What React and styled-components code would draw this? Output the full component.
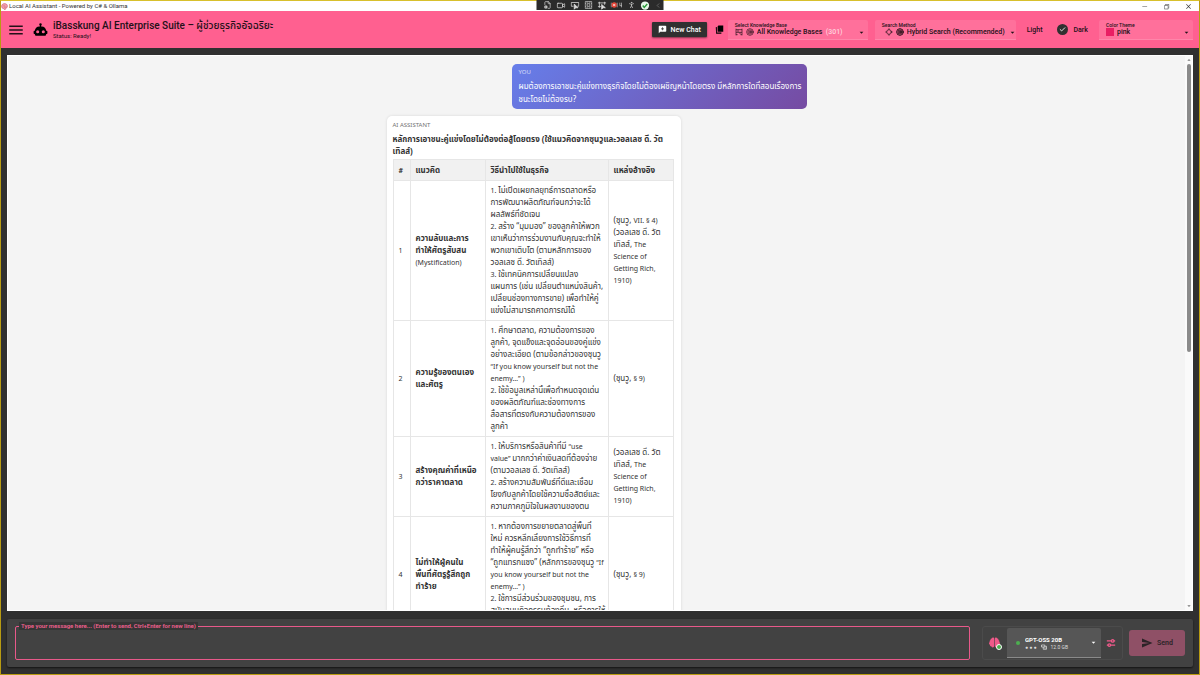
import styled, { createGlobalStyle } from 'styled-components';
import { FaBrain } from 'react-icons/fa';
import { MdArrowDropDown, MdArrowDropUp, MdSend, MdMenu } from 'react-icons/md';
import { VscChromeClose, VscChromeMinimize, VscChromeRestore } from 'react-icons/vsc';
import {
  Check,
  ChevronLeft,
  FileCog,
  Locate,
  PersonStanding,
  Target,
  Video
} from 'lucide-react';

const GlobalStyle = createGlobalStyle`
  * {
    box-sizing: border-box;
  }

  body {
    margin: 0;
    overflow: hidden;
    font-family: Roboto, "Noto Sans Thai", sans-serif;
  }

  button, select, textarea, input {
    margin: 0;
    padding: 0;
    border: 0;
    font: inherit;
    color: inherit;
    background: transparent;
  }

  svg {
    display: block;
    flex: none;
  }
`;

const Window = styled.div`
  display: flex;
  flex-direction: column;
  height: 100vh;
  border: 1px solid #b89b12;
  border-top-color: #d8c02c;
  background: #303030;
`;

const TitleBar = styled.div`
  display: flex;
  align-items: center;
  flex: none;
  height: 10px;
  background: #fff;
  color: #333;
  font-size: 6px;
  line-height: 8px;
  gap: 1px;
`;

const WindowButtons = styled.div`
  display: flex;
  margin-left: auto;
  gap: 15px;
  padding-right: 7px;
`;

const WindowButton = styled.button`
  display: flex;
  color: #333;
`;

const DebugBar = styled.div`
  position: absolute;
  top: 0;
  left: 50%;
  transform: translateX(-50%);
  display: flex;
  align-items: center;
  justify-content: space-between;
  width: 127px;
  height: 10px;
  padding: 0 2px 0 7px;
  background: #2b2b2b;
  color: #ddd;
`;

const Header = styled.header`
  display: flex;
  align-items: center;
  flex: none;
  height: 37px;
  padding: 0 6px;
  background: #ff6090;
  color: #241018;
`;

const MenuButton = styled.button`
  display: flex;
  margin-right: 8px;
`;

const Brand = styled.div`
  margin-left: 5px;
  margin-right: auto;
`;

const BrandTitle = styled.h1`
  margin: 0;
  font-size: 10px;
  font-weight: 500;
  line-height: 12px;
  white-space: nowrap;
`;

const Status = styled.div`
  font-size: 6px;
  line-height: 8px;
`;

const NewChatButton = styled.button`
  display: flex;
  align-items: center;
  gap: 4px;
  height: 15px;
  margin-right: 8px;
  padding: 0 6px;
  border-radius: 1px;
  background: #303030;
  box-shadow: 0 1px 2px rgba(0, 0, 0, 0.5);
  color: #fff;
  font-size: 7px;
  font-weight: 500;
  white-space: nowrap;
`;

const IconButton = styled.button`
  display: flex;
  color: ${props => props.$color || 'inherit'};
`;

const Field = styled.div`
  display: flex;
  flex-direction: column;
  justify-content: center;
  width: ${props => props.$width};
  height: 20px;
  margin-left: ${props => props.$gap};
  padding: 0 2px 0 7px;
  border-bottom: 1px solid #ff86aa;
  border-radius: 2px 2px 0 0;
  background: #ff709b;
`;

const FieldLabel = styled.label`
  font-size: 5px;
  font-weight: 500;
  line-height: 6px;
`;

const FieldRow = styled.div`
  display: flex;
  align-items: center;
  gap: 3px;
  height: 9px;
  padding-left: ${props => props.$indent || 0};
  font-size: 7px;
  font-weight: 500;
  line-height: 9px;
`;

const Select = styled.select`
  appearance: none;
  height: 9px;
  line-height: 9px;
  outline: none;
`;

const Count = styled.span`
  color: #ffd0de;
`;

const Arrow = styled.span`
  display: flex;
  margin-left: auto;
`;

const Swatch = styled.span`
  width: 8px;
  height: 8px;
  background: #e91e63;
`;

const ThemeToggle = styled.div`
  display: flex;
  align-items: center;
  margin: 0 11px;
  font-size: 7px;
  font-weight: 500;
`;

const ToggleLabel = styled.label`
  display: flex;
  align-items: center;
  gap: 6px;
  margin-left: 14px;
`;

const ToggleCircle = styled.span`
  display: grid;
  place-items: center;
  width: 11px;
  height: 11px;
  border-radius: 50%;
  background: #303030;
  color: #fff;

  > * {
    grid-area: 1 / 1;
  }
`;

const ToggleInput = styled.input`
  appearance: none;
  width: 11px;
  height: 11px;
`;

const ChatFrame = styled.main`
  display: flex;
  flex: 1;
  min-height: 0;
  margin: 7px 6px 8px;
  border: 1px solid #fff;
  background: #f4f4f4;
`;

const Messages = styled.div`
  flex: 1;
  overflow: hidden;
  padding-top: 8px;
  color: #333;
  font-family: "Noto Sans", "Noto Sans Thai", sans-serif;
  font-size: 8px;
  line-height: 12px;
`;

const Thread = styled.div`
  display: flex;
  flex-direction: column;
  gap: 7px;
  max-width: 420px;
  margin: 0 auto;
`;

const Message = styled.article`
  border-radius: 5px;
  white-space: pre;
`;

const UserMessage = styled(Message)`
  align-self: flex-end;
  width: 295px;
  height: 45px;
  padding: 2px 7px;
  background: linear-gradient(135deg, #667eea 0%, #764ba2 100%);
  color: #fff;
  line-height: 13px;
`;

const BotMessage = styled(Message)`
  width: 294px;
  padding: 3px 6px;
  background: #fff;
  box-shadow: 0 0 3px rgba(0, 0, 0, 0.12);
`;

const Author = styled.div`
  font-size: 6px;
  opacity: 0.7;
`;

const Heading = styled.h2`
  margin: 2px 0;
  font-size: 8px;
  font-weight: 700;
  line-height: 12px;
`;

const Latin = styled.span`
  font-size: 7px;
  line-height: 10px;
`;

const Table = styled.table`
  width: 280px;
  table-layout: fixed;
  border-collapse: collapse;
`;

const Col = styled.col`
  width: ${props => props.$width};
`;

const HeadCell = styled.th`
  padding: 4px 5px;
  border: 1px solid #e6e6e6;
  background: #f1f1f1;
  text-align: left;
`;

const Cell = styled.td`
  padding: 3px 5px 4px;
  border: 1px solid #e6e6e6;
`;

const ScrollTrack = styled.div`
  display: flex;
  flex-direction: column;
  align-items: center;
  width: 7px;
  background: #fafafa;
  color: #777;
`;

const ScrollThumb = styled.div`
  width: 4px;
  height: 52%;
  border-radius: 2px;
  background: #8a8a8a;
`;

const ScrollEnd = styled.span`
  margin-top: auto;
`;

const Composer = styled.form`
  display: flex;
  align-items: center;
  flex: none;
  height: 48px;
  margin: 0 6px 7px;
  padding: 0 8px;
  border-radius: 2px;
  background: #424242;
  box-shadow: 0 1px 2px rgba(0, 0, 0, 0.6);
`;

const MessageBox = styled.div`
  position: relative;
  display: flex;
  flex: 1;
  height: 34px;
  border: 1px solid #e8598a;
  border-radius: 2px;
`;

const MessageLabel = styled.label`
  position: absolute;
  top: -5px;
  left: 3px;
  padding: 0 2px;
  background: #353535;
  color: #f0608f;
  font-size: 6px;
  font-weight: 600;
  line-height: 8px;
`;

const MessageInput = styled.textarea`
  flex: 1;
  padding: 8px 6px;
  color: #fff;
  font-size: 7px;
  resize: none;
  outline: none;
`;

const ModelPanel = styled.div`
  display: flex;
  align-items: center;
  height: 34px;
  margin: 0 6px 0 12px;
  padding: 0 6px;
  border: 1px solid #4b4b4b;
  border-radius: 3px;
  gap: 5px;
`;

const ModelField = styled.div`
  display: flex;
  align-items: center;
  width: 94px;
  height: 30px;
  padding: 0 3px 0 9px;
  border-bottom: 1px solid #8a8a8a;
  border-radius: 2px 2px 0 0;
  background: #565656;
  color: #fff;
  gap: 5px;
`;

const OnlineDot = styled.span`
  width: 4px;
  height: 4px;
  border-radius: 50%;
  background: #4caf50;
`;

const ModelName = styled(Select)`
  display: block;
  font-size: 6px;
  font-weight: 700;
`;

const ModelInfo = styled.div`
  display: flex;
  align-items: center;
  gap: 4px;
  height: 6px;
  color: #ddd;
  font-size: 5px;
  line-height: 6px;
`;

const SendButton = styled.button`
  display: flex;
  align-items: center;
  justify-content: center;
  gap: 4px;
  width: 56px;
  height: 26px;
  border-radius: 3px;
  background: #8f5066;
  color: #2b2327;
  font-size: 7px;
  font-weight: 600;
`;

const RobotIcon = () => (
  <svg width="15" height="15" viewBox="0 0 24 24" fill="#000">
    <path d="M12,2A2,2 0 0,1 14,4C14,4.74 13.6,5.39 13,5.73V7H14A7,7 0 0,1 21,14H22A1,1 0 0,1 23,15V18A1,1 0 0,1 22,19H21V20A2,2 0 0,1 19,22H5A2,2 0 0,1 3,20V19H2A1,1 0 0,1 1,18V15A1,1 0 0,1 2,14H3A7,7 0 0,1 10,7H11V5.73C10.4,5.39 10,4.74 10,4A2,2 0 0,1 12,2M7.5,13A2.5,2.5 0 0,0 5,15.5A2.5,2.5 0 0,0 7.5,18A2.5,2.5 0 0,0 10,15.5A2.5,2.5 0 0,0 7.5,13M16.5,13A2.5,2.5 0 0,0 14,15.5A2.5,2.5 0 0,0 16.5,18A2.5,2.5 0 0,0 19,15.5A2.5,2.5 0 0,0 16.5,13Z" />
  </svg>
);

const ChatPlusIcon = () => (
  <svg width="9" height="9" viewBox="0 0 24 24" fill="#fff">
    <path d="M4 2h16a2 2 0 0 1 2 2v12a2 2 0 0 1-2 2H6l-4 4V4a2 2 0 0 1 2-2zm7 4v3H8v2h3v3h2v-3h3V9h-3V6z" />
  </svg>
);

const BooksIcon = () => (
  <svg width="9" height="9" viewBox="0 0 24 24" fill="#000">
    <path d="M9 1h13v17H7V4zM2 6l3-1v15h12v3H3z" />
  </svg>
);

const KnowledgeIcon = () => (
  <svg width="8" height="8" viewBox="0 0 24 24" fill="none" stroke="currentColor" strokeWidth="2">
    <path d="M3 2v20M21 2v20M3 5h18M3 13h18M3 20h5M16 20h5M9 5v8M15 13v5" />
  </svg>
);

const StackIcon = () => (
  <svg width="6" height="6" viewBox="0 0 24 24" fill="none" stroke="currentColor" strokeWidth="3">
    <path d="M2 4h13v8H2zM9 12v9h13V9h-7M13 16h6" />
  </svg>
);

const LogoIcon = () => (
  <svg width="7" height="7" viewBox="0 0 24 24" fill="#f2a0ae" stroke="#c9586c" strokeWidth="2">
    <path d="M12 2c-5 0-10 3-10 9 0 5 3 8 7 8l2 3h4v-4c5 0 7-3 7-8 0-5-5-8-10-8zM6 10c3-2 4 2 7-1M10 15c3 0 4-2 8-2" />
  </svg>
);

const ScreenPointerIcon = () => (
  <svg width="9" height="9" viewBox="0 0 24 24" fill="none" stroke="currentColor" strokeWidth="2">
    <path d="M8 14H2V4h20v10h-4" />
    <path d="M10 8v14l4-4h6z" fill="currentColor" />
  </svg>
);

const LayoutBoundsIcon = () => (
  <svg width="8" height="8" viewBox="0 0 24 24" fill="none" stroke="currentColor" strokeWidth="2">
    <path d="M2 2h20v20H2zM8 8h8v8H8zM8 2v3M16 2v3M8 19v3M16 19v3M2 8h3M2 16h3M19 8h3M19 16h3" />
  </svg>
);

const FramePointerIcon = () => (
  <svg width="9" height="9" viewBox="0 0 24 24" fill="none" stroke="currentColor" strokeWidth="2">
    <path d="M5 2v16M19 2v8M1 5h22M1 15h8" />
    <path d="M11 9v13l4-4h6z" fill="currentColor" />
  </svg>
);

const HotReloadIcon = () => (
  <svg width="12" height="8" viewBox="0 0 36 24" fill="none" stroke="#ccc" strokeWidth="2">
    <path d="M2 5v14M20 5v14M28 5v9h6M33 5v14" />
    <circle cx="11" cy="12" r="8" fill="#e5483b" stroke="none" />
    <path d="M8 9l6 6M14 9l-6 6" stroke="#fff" />
  </svg>
);

const PassIcon = () => (
  <svg width="9" height="9" viewBox="0 0 24 24" fill="none">
    <circle cx="12" cy="12" r="11" fill="#e8f7ea" />
    <path d="M6 12l4 5 8-9" stroke="#2e9d3c" strokeWidth="4" />
  </svg>
);

const BrainBadge = () => (
  <svg width="13" height="13" viewBox="0 0 26 26">
    <FaBrain size={22} color="#ef5a8a" />
    <circle cx="20" cy="20" r="5" fill="#4caf50" stroke="#fff" strokeWidth="2" />
  </svg>
);

const SlidersIcon = () => (
  <svg width="10" height="10" viewBox="0 0 24 24" fill="none" stroke="currentColor" strokeWidth="3">
    <path d="M2 7h11M19 7h3M2 17h3M11 17h11" />
    <circle cx="16" cy="7" r="3" />
    <circle cx="8" cy="17" r="3" />
  </svg>
);

const rows = [
  {
    concept: 'ความลับและการ\nทำให้ศัตรูสับสน',
    term: '(Mystification)',
    usage: `1. ไม่เปิดเผยกลยุทธ์การตลาดหรือ
การพัฒนาผลิตภัณฑ์จนกว่าจะได้
ผลลัพธ์ที่ชัดเจน
2. สร้าง “มุมมอง” ของลูกค้าให้พวก
เขาเห็นว่าการร่วมงานกับคุณจะทำให้
พวกเขาเติบโต (ตามหลักการของ
วอลเลซ ดี. วัตเทิลส์)
3. ใช้เทคนิคการเปลี่ยนแปลง
แผนการ (เช่น เปลี่ยนตำแหน่งสินค้า,
เปลี่ยนช่องทางการขาย) เพื่อทำให้คู่
แข่งไม่สามารถคาดการณ์ได้`,
    source: '(ซุนวู, VII. § 4)\n(วอลเลซ ดี. วัต\nเทิลส์, The\nScience of\nGetting Rich,\n1910)'
  },
  {
    concept: 'ความรู้ของตนเอง\nและศัตรู',
    usage: `1. ศึกษาตลาด, ความต้องการของ
ลูกค้า, จุดแข็งและจุดอ่อนของคู่แข่ง
อย่างละเอียด (ตามข้อกล่าวของซุนวู
“If you know yourself but not the
enemy…” )
2. ใช้ข้อมูลเหล่านี้เพื่อกำหนดจุดเด่น
ของผลิตภัณฑ์และช่องทางการ
สื่อสารที่ตรงกับความต้องการของ
ลูกค้า`,
    source: '(ซุนวู, § 9)'
  },
  {
    concept: 'สร้างคุณค่าที่เหนือ\nกว่าราคาตลาด',
    usage: `1. ให้บริการหรือสินค้าที่มี “use
value” มากกว่าค่าเงินสดที่ต้องจ่าย
(ตามวอลเลซ ดี. วัตเทิลส์)
2. สร้างความสัมพันธ์ที่ดีและเชื่อม
โยงกับลูกค้าโดยใช้ความซื่อสัตย์และ
ความภาคภูมิใจในผลงานของตน`,
    source: '(วอลเลซ ดี. วัต\nเทิลส์, The\nScience of\nGetting Rich,\n1910)'
  },
  {
    concept: 'ไม่ทำให้ผู้คนใน\nพื้นที่ศัตรูรู้สึกถูก\nทำร้าย',
    usage: `1. หากต้องการขยายตลาดสู่พื้นที่
ใหม่ ควรหลีกเลี่ยงการใช้วิธีการที่
ทำให้ผู้คนรู้สึกว่า “ถูกทำร้าย” หรือ
“ถูกแทรกแซง” (หลักการของซุนวู “If
you know yourself but not the
enemy…” )
2. ใช้การมีส่วนร่วมของชุมชน, การ
สนับสนุนกิจกรรมท้องถิ่น, หรือการให้
ความรู้แก่ชุมชน`,
    source: '(ซุนวู, § 9)'
  }
];

// Latin runs look larger than Thai at the same size, so they get their own
const MixedText = ({ children }) =>
  children
    .split(/([“(]?[A-Za-z§\d][A-Za-z§\d ,.…”)]*)/)
    .map((part, index) => (index % 2 ? <Latin key={index}>{part}</Latin> : part));

const DropArrow = () => (
  <Arrow>
    <MdArrowDropDown size={9} />
  </Arrow>
);

const ChatHeader = () => (
  <Header>
    <MenuButton aria-label="Menu">
      <MdMenu size={18} />
    </MenuButton>
    <RobotIcon />
    <Brand>
      <BrandTitle>iBasskung AI Enterprise Suite – ผู้ช่วยธุรกิจอัจฉริยะ</BrandTitle>
      <Status>Status: Ready!</Status>
    </Brand>
    <NewChatButton>
      <ChatPlusIcon />
      New Chat
    </NewChatButton>
    <IconButton aria-label="Library">
      <BooksIcon />
    </IconButton>
    <Field $width="140px" $gap="4px">
      <FieldLabel htmlFor="knowledge">Select Knowledge Base</FieldLabel>
      <FieldRow>
        <KnowledgeIcon />
        <Target size={8} />
        <Select id="knowledge">
          <option>All Knowledge Bases</option>
        </Select>
        <Count>(301)</Count>
        <DropArrow />
      </FieldRow>
    </Field>
    <Field $width="141px" $gap="7px">
      <FieldLabel htmlFor="method">Search Method</FieldLabel>
      <FieldRow $indent="3px">
        <Locate size={8} />
        <Target size={8} strokeWidth={3} />
        <Select id="method">
          <option>Hybrid Search (Recommended)</option>
        </Select>
        <DropArrow />
      </FieldRow>
    </Field>
    <ThemeToggle>
      Light
      <ToggleLabel>
        <ToggleCircle>
          <ToggleInput type="checkbox" defaultChecked />
          <Check size={7} strokeWidth={3} />
        </ToggleCircle>
        Dark
      </ToggleLabel>
    </ThemeToggle>
    <Field $width="94px" $gap="0">
      <FieldLabel htmlFor="theme">Color Theme</FieldLabel>
      <FieldRow>
        <Swatch />
        <Select id="theme">
          <option>pink</option>
        </Select>
        <DropArrow />
      </FieldRow>
    </Field>
  </Header>
);

const AnswerTable = () => (
  <Table>
    <colgroup>
      <Col $width="17px" />
      <Col $width="75px" />
      <Col $width="123px" />
      <Col $width="65px" />
    </colgroup>
    <thead>
      <tr>
        <HeadCell><Latin>#</Latin></HeadCell>
        <HeadCell>แนวคิด</HeadCell>
        <HeadCell>วิธีนำไปใช้ในธุรกิจ</HeadCell>
        <HeadCell>แหล่งอ้างอิง</HeadCell>
      </tr>
    </thead>
    <tbody>
      {rows.map((row, index) => (
        <tr key={row.concept}>
          <Cell><Latin>{index + 1}</Latin></Cell>
          <Cell>
            <strong>{row.concept}</strong>
            {row.term && <Latin>{`\n${row.term}`}</Latin>}
          </Cell>
          <Cell><MixedText>{row.usage}</MixedText></Cell>
          <Cell><MixedText>{row.source}</MixedText></Cell>
        </tr>
      ))}
    </tbody>
  </Table>
);

const App = () => (
  <>
    <GlobalStyle />
    <Window>
      <TitleBar>
        <LogoIcon />
        Local AI Assistant - Powered by C# &amp; Ollama
        <WindowButtons>
          <WindowButton aria-label="Minimize"><VscChromeMinimize size={7} /></WindowButton>
          <WindowButton aria-label="Restore"><VscChromeRestore size={7} /></WindowButton>
          <WindowButton aria-label="Close"><VscChromeClose size={7} /></WindowButton>
        </WindowButtons>
      </TitleBar>
      <DebugBar>
        <FileCog size={8} />
        <Video size={9} />
        <ScreenPointerIcon />
        <LayoutBoundsIcon />
        <FramePointerIcon />
        <HotReloadIcon />
        <PersonStanding size={8} />
        <PassIcon />
        <ChevronLeft size={7} color="#888" />
      </DebugBar>
      <ChatHeader />
      <ChatFrame>
        <Messages>
          <Thread>
            <UserMessage>
              <Author>YOU</Author>
              {'ผมต้องการเอาชนะคู่แข่งทางธุรกิจโดยไม่ต้องเผชิญหน้าโดยตรง มีหลักการใดที่สอนเรื่องการ\nชนะโดยไม่ต้องรบ?'}
            </UserMessage>
            <BotMessage>
              <Author>AI ASSISTANT</Author>
              <Heading>
                {'หลักการเอาชนะคู่แข่งโดยไม่ต้องต่อสู้โดยตรง (ใช้แนวคิดจากซุนวูและวอลเลซ ดี. วัต\nเทิลส์)'}
              </Heading>
              <AnswerTable />
            </BotMessage>
          </Thread>
        </Messages>
        <ScrollTrack>
          <MdArrowDropUp size={8} />
          <ScrollThumb />
          <ScrollEnd>
            <MdArrowDropDown size={8} />
          </ScrollEnd>
        </ScrollTrack>
      </ChatFrame>
      <Composer onSubmit={event => event.preventDefault()}>
        <MessageBox>
          <MessageLabel htmlFor="message">
            Type your message here... (Enter to send, Ctrl+Enter for new line)
          </MessageLabel>
          <MessageInput id="message" />
        </MessageBox>
        <ModelPanel>
          <BrainBadge />
          <ModelField>
            <OnlineDot />
            <div>
              <ModelName aria-label="Model">
                <option>GPT-OSS 20B</option>
              </ModelName>
              <ModelInfo>
                <span>● ● ●</span>
                <StackIcon />
                12.0 GB
              </ModelInfo>
            </div>
            <DropArrow />
          </ModelField>
          <IconButton type="button" aria-label="Model settings" $color="#ef5a8a">
            <SlidersIcon />
          </IconButton>
        </ModelPanel>
        <SendButton>
          <MdSend size={12} />
          Send
        </SendButton>
      </Composer>
    </Window>
  </>
);

export default App;
